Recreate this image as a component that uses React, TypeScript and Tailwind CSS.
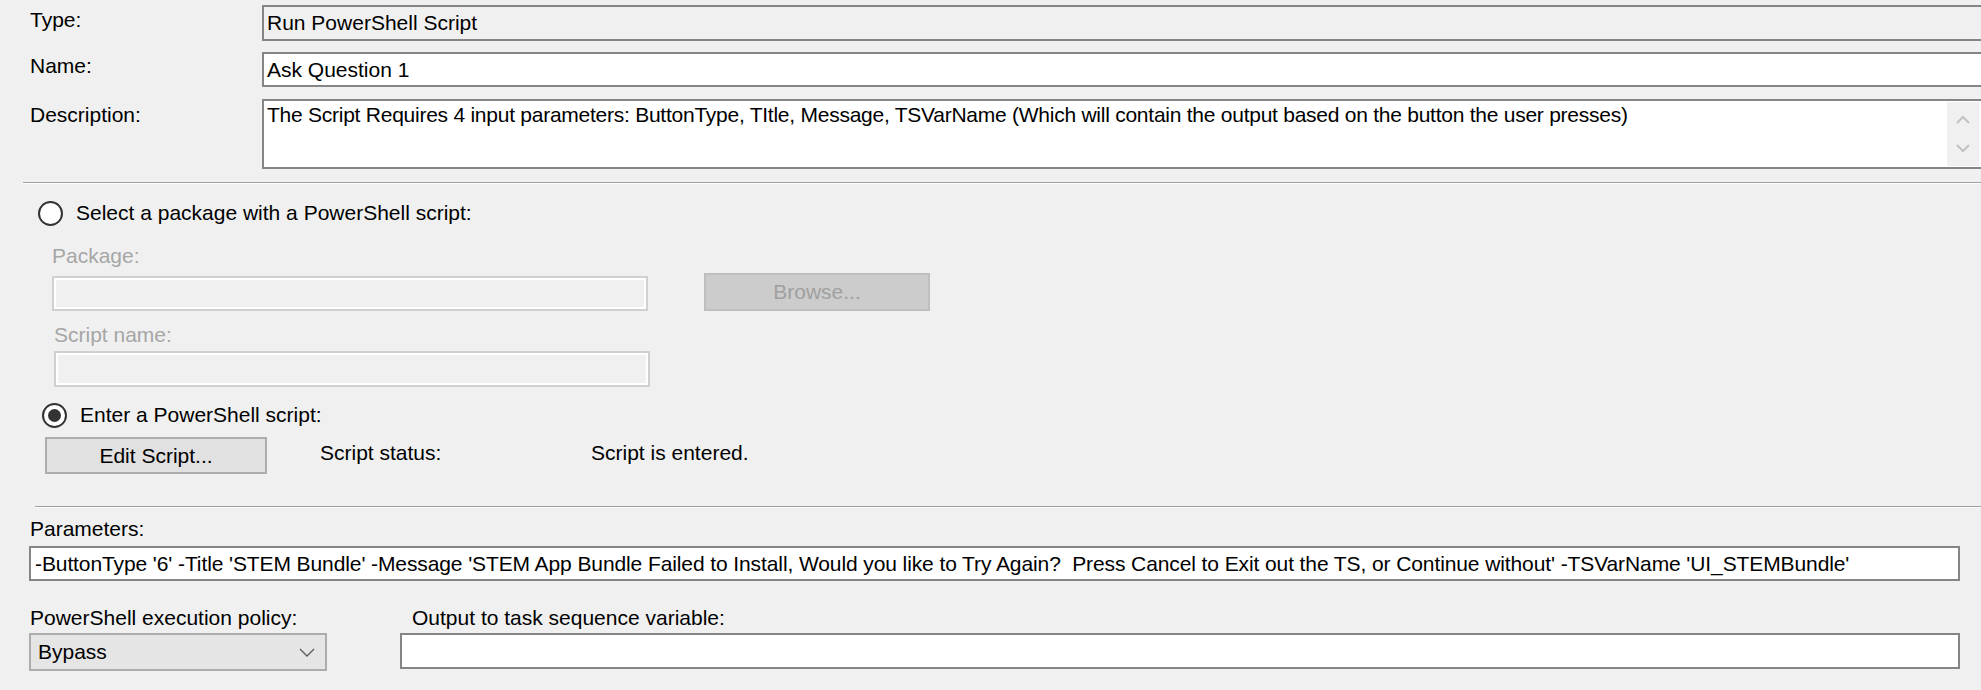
import React from 'react';

const font = { fontFamily: '"Liberation Sans", Arial, sans-serif' };

type FieldProps = {
  value?: string;
  className?: string;
  readOnly?: boolean;
};

const Field: React.FC<FieldProps> = ({ value, className = '', readOnly }) => (
  <div
    className={`shrink-0 border-2 border-[#858585] flex items-center pl-[3px] leading-[24px] whitespace-pre overflow-hidden ${
      readOnly ? 'bg-[#f0f0f0]' : 'bg-white'
    } ${className}`}
  >
    {value}
  </div>
);

const DisabledField: React.FC<{ className?: string }> = ({ className = '' }) => (
  <div className={`shrink-0 border-2 border-[#d0d0d0] bg-[#f0f0f0] shadow-[inset_0_0_0_2px_#ffffff] ${className}`} />
);

const Radio: React.FC<{ checked?: boolean }> = ({ checked }) => (
  <div className="w-[25px] h-[25px] shrink-0 rounded-full border-2 border-[#333333] bg-white flex items-center justify-center">
    {checked && <div className="w-[13px] h-[13px] rounded-full bg-[#333333]" />}
  </div>
);

const Separator: React.FC<{ className?: string }> = ({ className = '' }) => (
  <div className={`h-[2px] border-t border-[#a0a0a0] border-b border-b-white ${className}`} />
);

const App: React.FC = () => {
  return (
    <div
      className="w-[1981px] h-[690px] bg-[#f0f0f0] overflow-hidden text-[21px] text-black flex flex-col"
      style={font}
    >
      {/* header fields */}
      <div className="flex mt-[5px] h-[36px]">
        <div className="w-[262px] shrink-0 pl-[30px] pt-[3px] leading-[24px]">Type:</div>
        <Field value="Run PowerShell Script" readOnly className="w-[1723px] h-[36px]" />
      </div>
      <div className="flex mt-[11px] h-[35px]">
        <div className="w-[262px] shrink-0 pl-[30px] pt-[2px] leading-[24px]">Name:</div>
        <Field value="Ask Question 1" className="w-[1723px] h-[35px]" />
      </div>
      <div className="flex mt-[12px] h-[70px]">
        <div className="w-[262px] shrink-0 pl-[30px] pt-[4px] leading-[24px]">Description:</div>
        <div className="w-[1723px] h-[70px] shrink-0 border-2 border-[#858585] bg-white flex">
          <div className="flex-1 pl-[3px] pt-[2px] leading-[24px] whitespace-pre tracking-[-0.25px]">
            The Script Requires 4 input parameters: ButtonType, TItle, Message, TSVarName (Which will contain the output based on the button the user presses)
          </div>
          <div className="w-[32px] mr-[4px] my-[1px] bg-[#f0f0f0] flex flex-col items-center justify-between py-[13px]">
            <svg width="14" height="9" viewBox="0 0 14 9">
              <polyline points="1,8 7,2 13,8" fill="none" stroke="#c2c2c2" strokeWidth="2" />
            </svg>
            <svg width="14" height="9" viewBox="0 0 14 9">
              <polyline points="1,1 7,7 13,1" fill="none" stroke="#c2c2c2" strokeWidth="2" />
            </svg>
          </div>
        </div>
      </div>

      <Separator className="mt-[13px] ml-[23px]" />

      {/* package option */}
      <div className="flex items-center mt-[17px] h-[24px] pl-[38px] leading-[24px]">
        <Radio />
        <span className="ml-[13px]">Select a package with a PowerShell script:</span>
      </div>
      <div className="mt-[19px] pl-[52px] leading-[24px] text-[#a6a6a6]">Package:</div>
      <div className="flex items-start mt-[5px]">
        <DisabledField className="ml-[52px] mt-[3px] w-[596px] h-[35px]" />
        <div className="ml-[56px] w-[226px] h-[38px] bg-[#cccccc] border-2 border-[#bfbfbf] flex items-center justify-center text-[#a0a0a0] leading-[24px]">
          Browse...
        </div>
      </div>
      <div className="mt-[12px] pl-[54px] leading-[24px] text-[#a6a6a6]">Script name:</div>
      <DisabledField className="mt-[4px] ml-[54px] w-[596px] h-[36px]" />

      {/* script option */}
      <div className="flex items-center mt-[16px] h-[24px] pl-[42px] leading-[24px]">
        <Radio checked />
        <span className="ml-[13px]">Enter a PowerShell script:</span>
      </div>
      <div className="flex items-start mt-[10px] h-[37px] leading-[24px]">
        <div className="ml-[45px] w-[222px] h-[37px] bg-[#e1e1e1] border-2 border-[#adadad] flex items-center justify-center">
          Edit Script...
        </div>
        <span className="ml-[53px] mt-[4px] w-[271px]">Script status:</span>
        <span className="mt-[4px]">Script is entered.</span>
      </div>

      <Separator className="mt-[32px] ml-[35px]" />

      {/* parameters */}
      <div className="mt-[9px] pl-[30px] leading-[24px]">Parameters:</div>
      <Field
        value="-ButtonType '6' -Title 'STEM Bundle' -Message 'STEM App Bundle Failed to Install, Would you like to Try Again?  Press Cancel to Exit out the TS, or Continue without' -TSVarName 'UI_STEMBundle'"
        className="mt-[5px] ml-[29px] w-[1931px] h-[35px] pl-[4px] tracking-[-0.1px]"
      />

      <div className="flex mt-[25px] leading-[24px]">
        <div className="w-[412px] shrink-0 pl-[30px]">PowerShell execution policy:</div>
        <div>Output to task sequence variable:</div>
      </div>
      <div className="flex items-start mt-[3px]">
        <div className="ml-[29px] w-[298px] h-[38px] bg-[#e5e5e5] border-2 border-[#acacac] flex items-center justify-between pl-[7px] pr-[10px] leading-[24px]">
          <span>Bypass</span>
          <svg width="16" height="9" viewBox="0 0 16 9">
            <polyline points="1,1 8,8 15,1" fill="none" stroke="#5a5a5a" strokeWidth="1.3" />
          </svg>
        </div>
        <Field className="ml-[73px] w-[1560px] h-[36px]" />
      </div>
    </div>
  );
};

export default App;
